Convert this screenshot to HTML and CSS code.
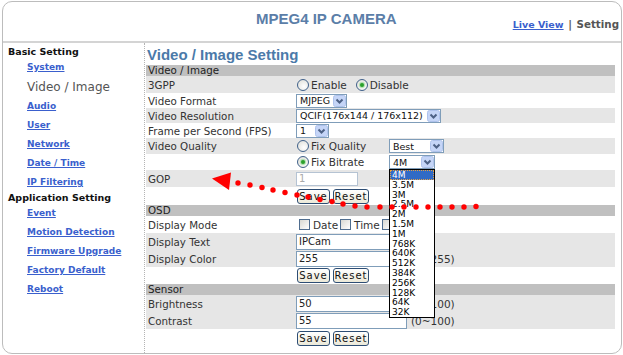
FILE: index.html
```html
<!DOCTYPE html>
<html lang="en">
<head>
  <meta charset="UTF-8" />
  <meta name="viewport" content="width=device-width, initial-scale=1.0" />
  <title>MPEG4 IP Camera - Video / Image Setting</title>
  <link rel="stylesheet" href="styles.css">
</head>
<body>
  <div class="frame">
    <div class="header">
      <h1>MPEG4 IP CAMERA</h1>
      <div class="top-links"><a href="#">Live View</a> | Setting</div>
    </div>

    <div class="main">
      <div class="sidebar">
        <h3>Basic Setting</h3>
        <a href="#">System</a>
        <span class="current">Video / Image</span>
        <a href="#">Audio</a>
        <a href="#">User</a>
        <a href="#">Network</a>
        <a href="#">Date / Time</a>
        <a href="#">IP Filtering</a>
        <h3 class="second">Application Setting</h3>
        <a href="#">Event</a>
        <a href="#">Motion Detection</a>
        <a href="#">Firmware Upgrade</a>
        <a href="#">Factory Default</a>
        <a href="#">Reboot</a>
      </div>

      <div class="content">
        <h2>Video / Image Setting</h2>

        <div class="row band"><div class="label">Video / Image</div></div>
        <div class="row shade r17">
          <div class="label">3GPP</div>
          <div class="value">
            <label class="opt"><span class="radio"></span>Enable</label>
            <label class="opt"><span class="radio on"></span>Disable</label>
          </div>
        </div>
        <div class="row r15">
          <div class="label">Video Format</div>
          <div class="value">
            <div class="select w-format"><span>MJPEG</span><svg class="arrow" width="13" height="12" viewBox="0 0 13 12"><rect x="0.5" y="0.5" width="12" height="11" rx="2" fill="#c5d5f7" stroke="#aec2ec"/><path d="M3.5 4.5 L6.5 7.5 L9.5 4.5" fill="none" stroke="#4d6185" stroke-width="2"/></svg></div>
          </div>
        </div>
        <div class="row shade r15">
          <div class="label">Video Resolution</div>
          <div class="value">
            <div class="select w-res"><span>QCIF(176x144 / 176x112)</span><svg class="arrow" width="13" height="12" viewBox="0 0 13 12"><rect x="0.5" y="0.5" width="12" height="11" rx="2" fill="#c5d5f7" stroke="#aec2ec"/><path d="M3.5 4.5 L6.5 7.5 L9.5 4.5" fill="none" stroke="#4d6185" stroke-width="2"/></svg></div>
          </div>
        </div>
        <div class="row r15">
          <div class="label">Frame per Second (FPS)</div>
          <div class="value">
            <div class="select w-fps"><span>1</span><svg class="arrow" width="13" height="12" viewBox="0 0 13 12"><rect x="0.5" y="0.5" width="12" height="11" rx="2" fill="#c5d5f7" stroke="#aec2ec"/><path d="M3.5 4.5 L6.5 7.5 L9.5 4.5" fill="none" stroke="#4d6185" stroke-width="2"/></svg></div>
          </div>
        </div>
        <div class="row shade r16">
          <div class="label">Video Quality</div>
          <div class="value">
            <label class="opt wide"><span class="radio"></span>Fix Quality</label>
            <div class="select w-best"><span>Best</span><svg class="arrow" width="13" height="12" viewBox="0 0 13 12"><rect x="0.5" y="0.5" width="12" height="11" rx="2" fill="#c5d5f7" stroke="#aec2ec"/><path d="M3.5 4.5 L6.5 7.5 L9.5 4.5" fill="none" stroke="#4d6185" stroke-width="2"/></svg></div>
          </div>
        </div>
        <div class="row r16">
          <div class="label"></div>
          <div class="value">
            <label class="opt wide"><span class="radio on"></span>Fix Bitrate</label>
            <div class="select w-rate open"><span>4M</span><svg class="arrow" width="13" height="12" viewBox="0 0 13 12"><rect x="0.5" y="0.5" width="12" height="11" rx="2" fill="#c5d5f7" stroke="#aec2ec"/><path d="M3.5 4.5 L6.5 7.5 L9.5 4.5" fill="none" stroke="#4d6185" stroke-width="2"/></svg>
              <ul class="listbox">
                <li class="sel">4M</li>
                <li>3.5M</li>
                <li>3M</li>
                <li>2.5M</li>
                <li>2M</li>
                <li>1.5M</li>
                <li>1M</li>
                <li>768K</li>
                <li>640K</li>
                <li>512K</li>
                <li>384K</li>
                <li>256K</li>
                <li>128K</li>
                <li>64K</li>
                <li>32K</li>
              </ul>
            </div>
          </div>
        </div>
        <div class="row shade r17">
          <div class="label">GOP</div>
          <div class="value"><input class="text gop" type="text" value="1" disabled></div>
        </div>
        <div class="row r18">
          <div class="label"></div>
          <div class="value"><button class="btn">Save</button><button class="btn reset">Reset</button></div>
        </div>

        <div class="row band"><div class="label">OSD</div></div>
        <div class="row r17">
          <div class="label">Display Mode</div>
          <div class="value checks">
            <label class="opt"><span class="check"></span>Date</label>
            <label class="opt"><span class="check"></span>Time</label>
            <label class="opt"><span class="check"></span></label>
          </div>
        </div>
        <div class="row shade r17">
          <div class="label">Display Text</div>
          <div class="value"><input class="text" type="text" value="IPCam"></div>
        </div>
        <div class="row shade r17">
          <div class="label">Display Color</div>
          <div class="value"><input class="text" type="text" value="255"><span class="hint">(0~255)</span></div>
        </div>
        <div class="row r17">
          <div class="label"></div>
          <div class="value"><button class="btn">Save</button><button class="btn reset">Reset</button></div>
        </div>

        <div class="row band"><div class="label">Sensor</div></div>
        <div class="row shade r17">
          <div class="label">Brightness</div>
          <div class="value"><input class="text" type="text" value="50"><span class="hint">(0~100)</span></div>
        </div>
        <div class="row shade r17">
          <div class="label">Contrast</div>
          <div class="value"><input class="text" type="text" value="55"><span class="hint">(0~100)</span></div>
        </div>
        <div class="row r18">
          <div class="label"></div>
          <div class="value"><button class="btn">Save</button><button class="btn reset">Reset</button></div>
        </div>
      </div>
    </div>
  </div>

  <!-- red annotation drawn over the page -->
  <svg class="annotation" width="623" height="355" viewBox="0 0 623 355">
    <polygon points="212,178.5 231,172.5 229,190" fill="#f00"/>
    <g fill="#f00">
      <circle cx="238" cy="183" r="2.7"/>
      <circle cx="250" cy="185" r="2.7"/>
      <circle cx="262" cy="187.5" r="2.7"/>
      <circle cx="273" cy="190" r="2.7"/>
      <circle cx="285" cy="192.5" r="2.7"/>
      <circle cx="297" cy="195" r="2.7"/>
      <circle cx="308" cy="197" r="2.7"/>
      <circle cx="320" cy="199.5" r="2.7"/>
      <circle cx="332" cy="201.5" r="2.7"/>
      <circle cx="343" cy="204" r="2.7"/>
      <circle cx="355" cy="206" r="2.7"/>
      <circle cx="367" cy="207" r="2.7"/>
      <circle cx="380" cy="207" r="2.7"/>
      <circle cx="392" cy="207" r="2.7"/>
      <circle cx="404" cy="207" r="2.7"/>
      <circle cx="416" cy="207" r="2.7"/>
      <circle cx="428" cy="207" r="2.7"/>
      <circle cx="440" cy="207" r="2.7"/>
      <circle cx="452" cy="207" r="2.7"/>
      <circle cx="464" cy="207" r="2.7"/>
      <circle cx="476" cy="206.5" r="2.7"/>
    </g>
  </svg>
</body>
</html>
```

FILE: styles.css
```css
* {
  box-sizing: border-box;
  margin: 0;
  padding: 0;
}

body {
  font-family: "DejaVu Sans", Verdana, sans-serif;
  background: #fff;
  color: #333;
  position: relative;
}

.frame {
  width: 620px;
  height: 353px;
  margin: 1px 0 0 2px;
  border: 1px solid #bcbcbc;
  border-radius: 10px;
  overflow: hidden;
  display: flex;
  flex-direction: column;
}

/* header */
.header {
  height: 41px;
  border-bottom: 2px solid #d4d4d4;
  display: flex;
  padding: 0 2px 0 253px;
}

.header h1 {
  font: bold 15px/18px "Liberation Sans", Arial, sans-serif;
  color: #5b7ea8;
  margin-top: 8px;
}

.top-links {
  margin: 16px 0 0 auto;
  font-size: 10.3px;
  line-height: 12px;
  font-weight: bold;
  color: #555;
  word-spacing: 1px;
}

.top-links a {
  color: #3a5fcd;
  font-size: 9.5px;
  word-spacing: 0;
}

/* sidebar */
.main {
  flex: 1;
  display: flex;
}

.sidebar {
  width: 142px;
  border-right: 1px dotted #b4b4b4;
  padding: 2px 0 0 5px;
  display: flex;
  flex-direction: column;
}

.sidebar h3 {
  font-size: 9.5px;
  line-height: 13px;
  color: #111;
}

.sidebar h3.second {
  line-height: 12px;
}

.sidebar a,
.sidebar .current {
  display: block;
  padding-left: 19px;
  line-height: 19px;
  font-size: 9px;
  font-weight: bold;
  color: #3a5fcd;
}

.sidebar .current {
  font-size: 12px;
  font-weight: normal;
  line-height: 20px;
  color: #555;
}

/* content */
.content {
  flex: 1;
  padding: 0 6px 0 1px;
}

.content h2 {
  font: bold 15px/21px "Liberation Sans", Arial, sans-serif;
  color: #4b7aa9;
  height: 22px;
  padding: 1px 0 0 1px;
}

.row {
  display: flex;
  align-items: center;
}

.r15 { height: 15px; }
.r16 { height: 16px; }
.r17 { height: 17px; }
.r18 { height: 18px; }

.band {
  height: 11px;
  background: #c0c0c0;
}

.shade {
  background: #e6e6e6;
}

.label {
  width: 150px;
  flex-shrink: 0;
  padding-left: 2px;
  font-size: 10.3px;
  line-height: 12px;
  color: #333;
}

.band .label {
  line-height: 11px;
  color: #222;
}

.value {
  flex: 1;
  display: flex;
  align-items: center;
}

/* radio & checkbox */
.opt {
  display: flex;
  align-items: center;
  gap: 2px;
  font-size: 10.5px;
  color: #333;
  margin: 0 8px 0 1px;
}

.opt.wide {
  width: 92px;
  margin-right: 0;
}

.radio {
  width: 12px;
  height: 12px;
  border: 1px solid #40618a;
  border-radius: 50%;
  background: radial-gradient(circle at 60% 65%, #fff, #dcdcd5);
  position: relative;
}

.radio.on::after {
  content: "";
  position: absolute;
  left: 3px;
  top: 3px;
  width: 4px;
  height: 4px;
  border-radius: 50%;
  background: #2ca02c;
  box-shadow: 0 0 1px 1px #a6dca6;
}

.checks .opt {
  gap: 3px;
  margin: 0 2px 0 0;
}

.checks .opt:first-child {
  margin-left: 3px;
}

.check {
  width: 11px;
  height: 11px;
  border: 1px solid #4f6d8f;
  background: linear-gradient(135deg, #d8d8d2, #fff);
}

/* selects */
.select {
  height: 14px;
  border: 1px solid #7f9db9;
  background: #fff;
  display: flex;
  align-items: center;
  justify-content: space-between;
  padding-left: 3px;
  font-size: 9.5px;
  color: #111;
  position: relative;
}

.select .arrow {
  flex-shrink: 0;
}

.w-format { width: 51px; }
.w-res { width: 145px; }
.w-fps { width: 33px; }
.w-best { width: 55px; }
.w-rate { width: 46px; }

.select.open {
  align-self: flex-start;
}

.listbox {
  position: absolute;
  left: -1px;
  top: 13px;
  width: 46px;
  border: 1px solid #000;
  background: #fff;
  list-style: none;
  z-index: 2;
}

.listbox li {
  height: 9.8px;
  line-height: 10px;
  font-size: 9px;
  padding-left: 2px;
  color: #000;
}

.listbox li.sel {
  background: #316ac5;
  color: #fff;
  outline: 1px dotted #e8a040;
  outline-offset: -1px;
}

/* inputs & buttons */
.text {
  width: 111px;
  height: 16px;
  border: 1px solid #7f9db9;
  font: 10px "DejaVu Sans", Verdana, sans-serif;
  padding-left: 2px;
  color: #222;
  background: #fff;
}

.text.gop {
  width: 62px;
  height: 14px;
  border-color: #b5c3d3;
  color: #aaa;
}

.hint {
  margin-left: 4px;
  font-size: 10.5px;
  color: #333;
}

.btn {
  width: 33px;
  height: 15px;
  margin: 0 3px 0 1px;
  border: 1px solid #2d4d74;
  border-radius: 3px;
  background: linear-gradient(#fff, #ece9d8);
  font: 10px "DejaVu Sans", Verdana, sans-serif;
  letter-spacing: 1px;
  color: #111;
}

.btn.reset {
  width: 36px;
  margin: 0;
}

.annotation {
  position: absolute;
  left: 0;
  top: 0;
  pointer-events: none;
  z-index: 5;
}
```
